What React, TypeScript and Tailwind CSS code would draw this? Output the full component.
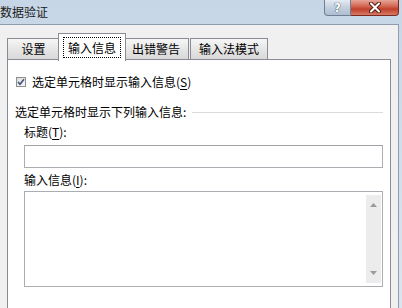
import React from "react";

function Checkbox() {
  return (
    <div className="w-[10px] h-[10px] border border-[#8e8f8f] bg-[linear-gradient(135deg,#dcdcdc,#f8f8f8)] flex items-center justify-center shrink-0">
      <svg width="8" height="8" viewBox="0 0 8 8">
        <path d="M1 4 L3 6.2 L7 1.2" fill="none" stroke="#40557a" strokeWidth="1.6" />
      </svg>
    </div>
  );
}

export default function App() {
  return (
    <div className="w-[402px] h-[308px] overflow-hidden flex flex-col bg-[linear-gradient(180deg,#c7d6e6,#dbe5ef)] text-[12px] leading-[14px] text-black font-['Noto_Sans_CJK_SC','Microsoft_YaHei',sans-serif]">
      {/* title bar */}
      <div className="h-[24px] shrink-0 flex items-start justify-between">
        <div className="pt-[5px] text-[#1a1a1a]">数据验证</div>
        <div className="flex pr-[3px]">
          <div className="w-[27px] h-[16px] border border-t-0 border-[#6e7f94] rounded-bl-[4px] bg-[linear-gradient(180deg,#e4ebf3,#c2cfdd_50%,#aebfd2)] flex items-center justify-center">
            <span className="text-[12px] leading-[12px] font-bold text-white font-['DejaVu_Sans',sans-serif] [text-shadow:0_0_1px_#34465c,0_0_1px_#34465c]">?</span>
          </div>
          <div className="w-[48px] h-[16px] border border-t-0 border-l-0 border-[#7c2a20] rounded-br-[4px] bg-[linear-gradient(180deg,#e6a698,#d0604c_45%,#c0402c_60%,#d67a64)] flex items-center justify-center">
            <svg width="14" height="11" viewBox="0 0 14 11">
              <path d="M3 1.5 L11 9.5 M11 1.5 L3 9.5" stroke="#5a1e16" strokeWidth="4" strokeLinecap="round" />
              <path d="M3 1.5 L11 9.5 M11 1.5 L3 9.5" stroke="#ffffff" strokeWidth="2" strokeLinecap="round" />
            </svg>
          </div>
        </div>
      </div>

      {/* client area */}
      <div className="flex-1 flex min-h-0">
        <div className="w-[399px] bg-[#f0f0f0] border-t border-r border-[#8f9eae] flex flex-col">
          {/* tabs */}
          <div className="relative z-10 flex items-end pl-[7px] pt-[8px] h-[34px] shrink-0">
            <div className="w-[53px] h-[21px] border border-b-0 border-[#898c95] bg-[linear-gradient(180deg,#f6f6f6,#e6e6e6_50%,#d9d9d9)] flex items-center justify-center">
              设置
            </div>
            <div className="relative z-10 -ml-[2px] -mb-[2px] w-[68px] h-[28px] border border-b-0 border-[#898c95] bg-white flex justify-center pt-[3px]">
              <div className="h-[21px] px-[4px] border border-dotted border-black flex items-center">输入信息</div>
            </div>
            <div className="-ml-[2px] w-[65px] h-[21px] border border-b-0 border-l-0 border-[#898c95] bg-[linear-gradient(180deg,#f6f6f6,#e6e6e6_50%,#d9d9d9)] flex items-center justify-center">
              出错警告
            </div>
            <div className="ml-[1px] w-[78px] h-[21px] border border-b-0 border-[#898c95] bg-[linear-gradient(180deg,#f6f6f6,#e6e6e6_50%,#d9d9d9)] flex items-center justify-center">
              输入法模式
            </div>
          </div>

          {/* panel */}
          <div className="flex-1 mx-[7px] bg-white border border-b-0 border-[#898c95] pt-[15px] px-[7px] flex flex-col">
            <div className="h-[14px] flex items-center ml-[1px] gap-[6px]">
              <Checkbox />
              <span>
                选定单元格时显示输入信息(<span className="underline underline-offset-2">S</span>)
              </span>
            </div>

            <div className="mt-[16px] h-[14px] flex items-center">
              <span>选定单元格时显示下列输入信息:</span>
              <div className="flex-1 h-px bg-[#dcdcdc] ml-[6px]" />
            </div>

            <div className="pl-[9px] flex flex-col">
              <div className="mt-[6px] h-[14px]">
                标题(<span className="underline underline-offset-2">T</span>):
              </div>
              <div className="mt-[6px] h-[23px] border border-[#abadb3] border-t-[#a0a2a8] bg-white" />
              <div className="mt-[5px] h-[14px]">
                输入信息(<span className="underline underline-offset-2">I</span>):
              </div>
              <div className="mt-[4px] h-[96px] border border-[#abadb3] bg-white flex justify-end">
                <div className="w-[15px] my-[3px] mr-[1px] bg-[#ececec] flex flex-col items-center justify-between py-[8px]">
                  <svg width="7" height="4" viewBox="0 0 7 4">
                    <path d="M0 4 L3.5 0 L7 4 Z" fill="#9a9a9a" />
                  </svg>
                  <svg width="7" height="4" viewBox="0 0 7 4">
                    <path d="M0 0 L3.5 4 L7 0 Z" fill="#9a9a9a" />
                  </svg>
                </div>
              </div>
            </div>
          </div>
        </div>
      </div>
    </div>
  );
}
